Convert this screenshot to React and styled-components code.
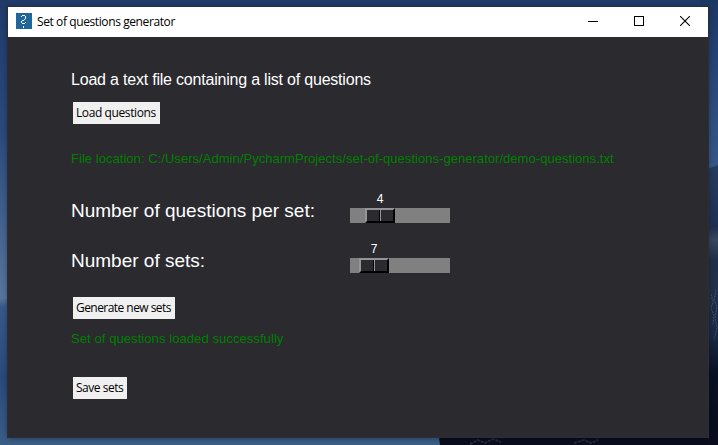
import React from "react";
import styled, { createGlobalStyle } from "styled-components";

const GlobalStyle = createGlobalStyle`
  * { box-sizing: border-box; }
  body { margin: 0; overflow: hidden; }
`;

const Desktop = styled.main`
  position: relative;
  width: 718px;
  height: 445px;
  padding: 7px 10px 8px 8px;
  background: #1d3460;
  overflow: hidden;
`;

const Wallpaper = styled.svg`
  position: absolute;
  inset: 0;
`;

const AppWindow = styled.section`
  position: relative;
  display: flex;
  flex-direction: column;
  width: 700px;
  height: 430px;
  background: #2b2a2f;
  box-shadow: 0 0 0 1px #2a2e38, 0 1px 6px rgba(0, 0, 0, 0.4);
`;

const TitleBar = styled.header`
  display: flex;
  align-items: center;
  height: 30px;
  padding-left: 8px;
  background: #fff;
`;

const AppIcon = styled.svg`
  flex: none;
  margin-top: -2px;
`;

const Title = styled.h1`
  flex: 1;
  margin: 0 0 0 5px;
  font: 400 12px/16px "Open Sans", "Noto Sans", sans-serif;
  letter-spacing: -0.4px;
  color: #000;
  white-space: nowrap;
`;

const WindowControls = styled.div`
  display: flex;
  height: 28px;
  align-self: flex-start;
`;

const ControlButton = styled.button`
  display: grid;
  place-items: center;
  width: 46px;
  padding: 0;
  border: 0;
  background: none;
`;

const Content = styled.div`
  display: flex;
  flex-direction: column;
  align-items: flex-start;
  padding: 33px 0 0 63px;
  font-family: "Liberation Sans", Arial, sans-serif;
`;

const Label = styled.p`
  margin: ${(p) => p.$top || 0}px 0 0;
  font-size: ${(p) => p.$size}px;
  line-height: 20px;
  letter-spacing: ${(p) => p.$spacing || 0}px;
  color: ${(p) => (p.$status ? "#008000" : "#fff")};
  white-space: nowrap;
`;

const ActionButton = styled.button`
  width: ${(p) => p.$width}px;
  height: 22px;
  margin: ${(p) => p.$top}px 0 0 2px;
  padding: 0 0 0 3px;
  border: 0;
  background: #f0f0f0;
  color: #000;
  font: 400 12px/22px "Open Sans", "Noto Sans", sans-serif;
  letter-spacing: ${(p) => p.$spacing}px;
  text-align: left;
  white-space: nowrap;
`;

const Settings = styled.div`
  margin-top: 22px;
`;

const SettingRow = styled.div`
  display: flex;
  height: 50px;
`;

const SettingName = styled.div`
  width: 279px;
`;

const Scale = styled.div`
  width: 100px;
`;

const ScaleValue = styled.output`
  display: block;
  width: 30px;
  height: 17px;
  margin-left: ${(p) => p.$offset}px;
  font-size: 12px;
  line-height: 17px;
  text-align: center;
  color: #fff;
`;

const Track = styled.div`
  height: 15px;
  padding-left: ${(p) => p.$offset}px;
  background: #808080;
`;

const Thumb = styled.div`
  display: flex;
  width: 30px;
  height: 15px;
  border: 2px solid;
  border-color: #959499 #000 #000 #959499;
  background: #2b2a2f;
`;

const ThumbHalf = styled.div`
  flex: 1;

  &:first-child {
    flex: 0 0 13px;
    border-right: 1px solid #000;
  }

  &:last-child {
    border-left: 1px solid #959499;
  }
`;

function Slider({ value, offset }) {
  return (
    <Scale>
      <ScaleValue $offset={offset}>{value}</ScaleValue>
      <Track $offset={offset}>
        <Thumb>
          <ThumbHalf />
          <ThumbHalf />
        </Thumb>
      </Track>
    </Scale>
  );
}

function Setting({ name, value, offset }) {
  return (
    <SettingRow>
      <SettingName>
        <Label $size={19} $top={10}>{name}</Label>
      </SettingName>
      <Slider value={value} offset={offset} />
    </SettingRow>
  );
}

export default function App() {
  return (
    <Desktop>
      <GlobalStyle />
      <Wallpaper width="718" height="445" viewBox="0 0 718 445" aria-hidden="true">
        <defs>
          <linearGradient id="sky" x1="0" y1="0" x2="0" y2="1">
            <stop offset="0" stopColor="#203a6b" />
            <stop offset="0.3" stopColor="#2c4a7c" />
            <stop offset="0.67" stopColor="#58759d" />
            <stop offset="0.69" stopColor="#37598a" />
            <stop offset="0.85" stopColor="#2a4a7c" />
            <stop offset="1" stopColor="#3a5e86" />
          </linearGradient>
          <linearGradient id="rightSky" x1="0" y1="0" x2="0" y2="1">
            <stop offset="0" stopColor="#1d3765" />
            <stop offset="1" stopColor="#38588a" />
          </linearGradient>
          <linearGradient id="cliff" x1="0" y1="0" x2="0" y2="1">
            <stop offset="0" stopColor="#263b60" />
            <stop offset="0.22" stopColor="#1f304f" />
            <stop offset="0.27" stopColor="#38475f" />
            <stop offset="0.34" stopColor="#202f49" />
            <stop offset="0.45" stopColor="#222f49" />
            <stop offset="0.6" stopColor="#1b2945" />
            <stop offset="0.75" stopColor="#0a1023" />
            <stop offset="1" stopColor="#080b1c" />
          </linearGradient>
        </defs>
        <rect width="718" height="445" fill="url(#sky)" />
        <rect width="718" height="8" fill="#203a69" />
        <rect x="700" width="18" height="175" fill="url(#rightSky)" />
        <path d="M700 172L718 165V445H700Z" fill="url(#cliff)" />
        <path d="M438 430H718V445H440Z" fill="#0a0d1e" />
        <path d="M711 294l2 8-2 6 3 7-1 9M716 290l-2 10 3 6-2 12 2 10-3 12" stroke="#56657e" strokeWidth="1" strokeDasharray="2 1" fill="none" opacity="0.6" />
        <path d="M470 444l8-4 7 3 8-4 8 3M574 443l10-3 7 3 7-3" stroke="#434858" strokeWidth="2" strokeDasharray="3 1" fill="none" opacity="0.5" />
      </Wallpaper>
      <AppWindow>
        <TitleBar>
          <AppIcon width="16" height="16" viewBox="0 0 16 16" shapeRendering="crispEdges">
            <rect width="16" height="16" fill="#216698" />
            <path
              d="M5 3h1v1h-1zM6 2h3v1h-3zM9 3h1v3h-1zM8 6h1v1h-1zM6 7h2v1h-2zM5 8h1v2h-1zM6 10h3v1h-3zM9 9h1v1h-1zM7 13h1v2h-1z"
              fill="#fff"
            />
          </AppIcon>
          <Title>Set of questions generator</Title>
          <WindowControls>
            <ControlButton aria-label="Minimize">
              <svg width="10" height="10" shapeRendering="crispEdges">
                <path d="M0 5.5h10" stroke="#000" />
              </svg>
            </ControlButton>
            <ControlButton aria-label="Maximize">
              <svg width="10" height="10" shapeRendering="crispEdges">
                <path d="M.5.5h9v9h-9z" stroke="#000" fill="none" />
              </svg>
            </ControlButton>
            <ControlButton aria-label="Close">
              <svg width="10" height="10">
                <path d="M0 0L10 10M10 0L0 10" stroke="#000" strokeWidth="1.1" />
              </svg>
            </ControlButton>
          </WindowControls>
        </TitleBar>
        <Content>
          <Label $size={16} $spacing={-0.205}>Load a text file containing a list of questions</Label>
          <ActionButton $width={87} $top={12} $spacing={-0.4}>Load questions</ActionButton>
          <Label $size={13} $top={25} $spacing={0.04} $status>
            File location: C:/Users/Admin/PycharmProjects/set-of-questions-generator/demo-questions.txt
          </Label>
          <Settings>
            <Setting name="Number of questions per set:" value={4} offset={15} />
            <Setting name="Number of sets:" value={7} offset={9} />
          </Settings>
          <ActionButton $width={102} $top={6} $spacing={-0.55}>Generate new sets</ActionButton>
          <Label $size={13} $top={10} $spacing={0.08} $status>Set of questions loaded successfully</Label>
          <ActionButton $width={54} $top={28} $spacing={-0.48}>Save sets</ActionButton>
        </Content>
      </AppWindow>
    </Desktop>
  );
}
